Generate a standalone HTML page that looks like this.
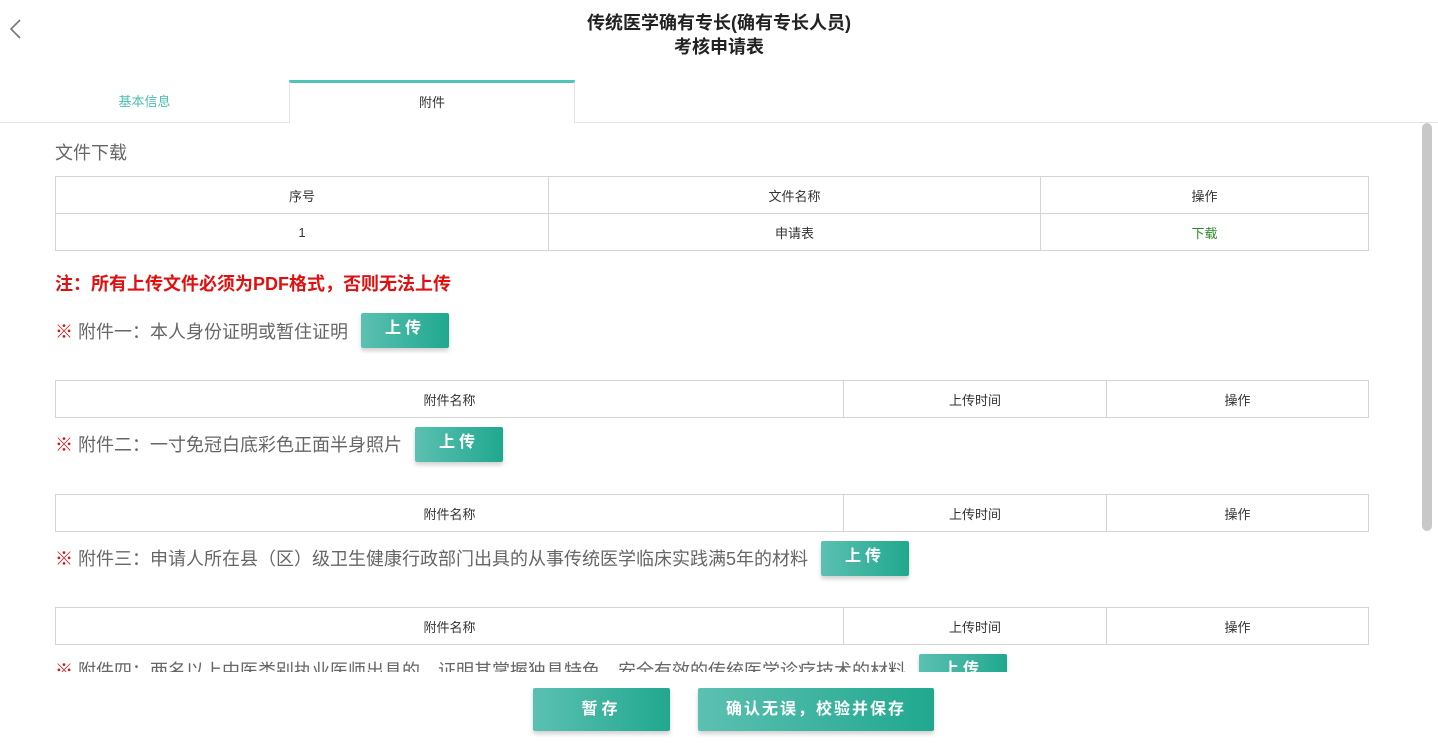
<!DOCTYPE html>
<html><head><meta charset="utf-8"><style>
*{margin:0;padding:0;box-sizing:border-box}
body{width:1438px;height:746px;background:#fff;font-family:"Liberation Sans","Noto Sans CJK SC",sans-serif;position:relative;overflow:hidden;color:#333}
.a{position:absolute}
.title{left:0;width:1438px;text-align:center;top:11px;font-size:18px;font-weight:bold;line-height:24px;color:#222}
.tab{top:80px;height:43px;font-size:13px;text-align:center;line-height:44px}
.scroll{left:0;top:122px;width:1438px;height:550px;overflow:hidden;border-top:1px solid #e4e4e4}
table{position:absolute;border-collapse:collapse;font-size:13px;color:#333}
td{border:1px solid #d4d4d4;text-align:center;height:37px}
.lbl{font-size:18px;color:#666;left:55px;line-height:24px}
.lbl b{color:#e01010;font-weight:normal}
.btn{background:linear-gradient(90deg,#5cc0b1,#20a88e);color:#fff;font-weight:bold;font-size:16px;text-align:center;box-shadow:0 3px 4px rgba(0,0,0,.18);letter-spacing:4px;border-radius:2px}
</style></head><body>
<svg class="a" style="left:8px;top:18px" width="14" height="22"><path d="M12 2 L3 11 L12 20" stroke="#777" stroke-width="1.6" fill="none"/></svg>
<div class="a title">传统医学确有专长(确有专长人员)<br>考核申请表</div>
<div class="a tab" style="left:0;width:289px;color:#4cbdb0">基本信息</div>
<div class="a tab" style="left:289px;width:286px;border-top:3px solid #4cc5b6;border-left:1px solid #e4e4e4;border-right:1px solid #e4e4e4;background:#fff;z-index:2;line-height:40px">附件</div>
<div class="a scroll">
<div class="a" style="left:55px;top:16px;font-size:18px;color:#666">文件下载</div>
<table style="left:55px;top:53px;width:1314px"><tr><td style="width:493px">序号</td><td style="width:492px">文件名称</td><td>操作</td></tr><tr><td>1</td><td>申请表</td><td style="color:#2a8a2a">下载</td></tr></table>
<div class="a" style="left:55px;top:147px;font-size:18px;font-weight:bold;color:#e01010">注：所有上传文件必须为PDF格式，否则无法上传</div>
<div class="a lbl" style="top:197px"><b>※</b> 附件一：本人身份证明或暂住证明</div>
<div class="a btn" style="left:361px;top:190px;width:88px;height:35px;line-height:31px">上传</div>
<table style="left:55px;top:257px;width:1314px"><tr><td style="width:788px">附件名称</td><td style="width:263px">上传时间</td><td>操作</td></tr></table>
<div class="a lbl" style="top:310px"><b>※</b> 附件二：一寸免冠白底彩色正面半身照片</div>
<div class="a btn" style="left:415px;top:304px;width:88px;height:35px;line-height:31px">上传</div>
<table style="left:55px;top:371px;width:1314px"><tr><td style="width:788px">附件名称</td><td style="width:263px">上传时间</td><td>操作</td></tr></table>
<div class="a lbl" style="top:424px"><b>※</b> 附件三：申请人所在县（区）级卫生健康行政部门出具的从事传统医学临床实践满5年的材料</div>
<div class="a btn" style="left:821px;top:418px;width:88px;height:35px;line-height:31px">上传</div>
<table style="left:55px;top:484px;width:1314px"><tr><td style="width:788px">附件名称</td><td style="width:263px">上传时间</td><td>操作</td></tr></table>
<div class="a lbl" style="top:536px"><b>※</b> 附件四：两名以上中医类别执业医师出具的，证明其掌握独具特色、安全有效的传统医学诊疗技术的材料</div>
<div class="a btn" style="left:919px;top:531px;width:88px;height:35px;line-height:31px">上传</div>
<div class="a" style="left:1422px;top:0;width:10px;height:408px;background:#c8c8c8;border-radius:5px"></div>
</div>
<div class="a btn" style="left:533px;top:688px;width:137px;height:43px;line-height:43px">暂存</div>
<div class="a btn" style="left:698px;top:688px;width:236px;height:43px;line-height:43px;letter-spacing:2px">确认无误，校验并保存</div>
</body></html>
